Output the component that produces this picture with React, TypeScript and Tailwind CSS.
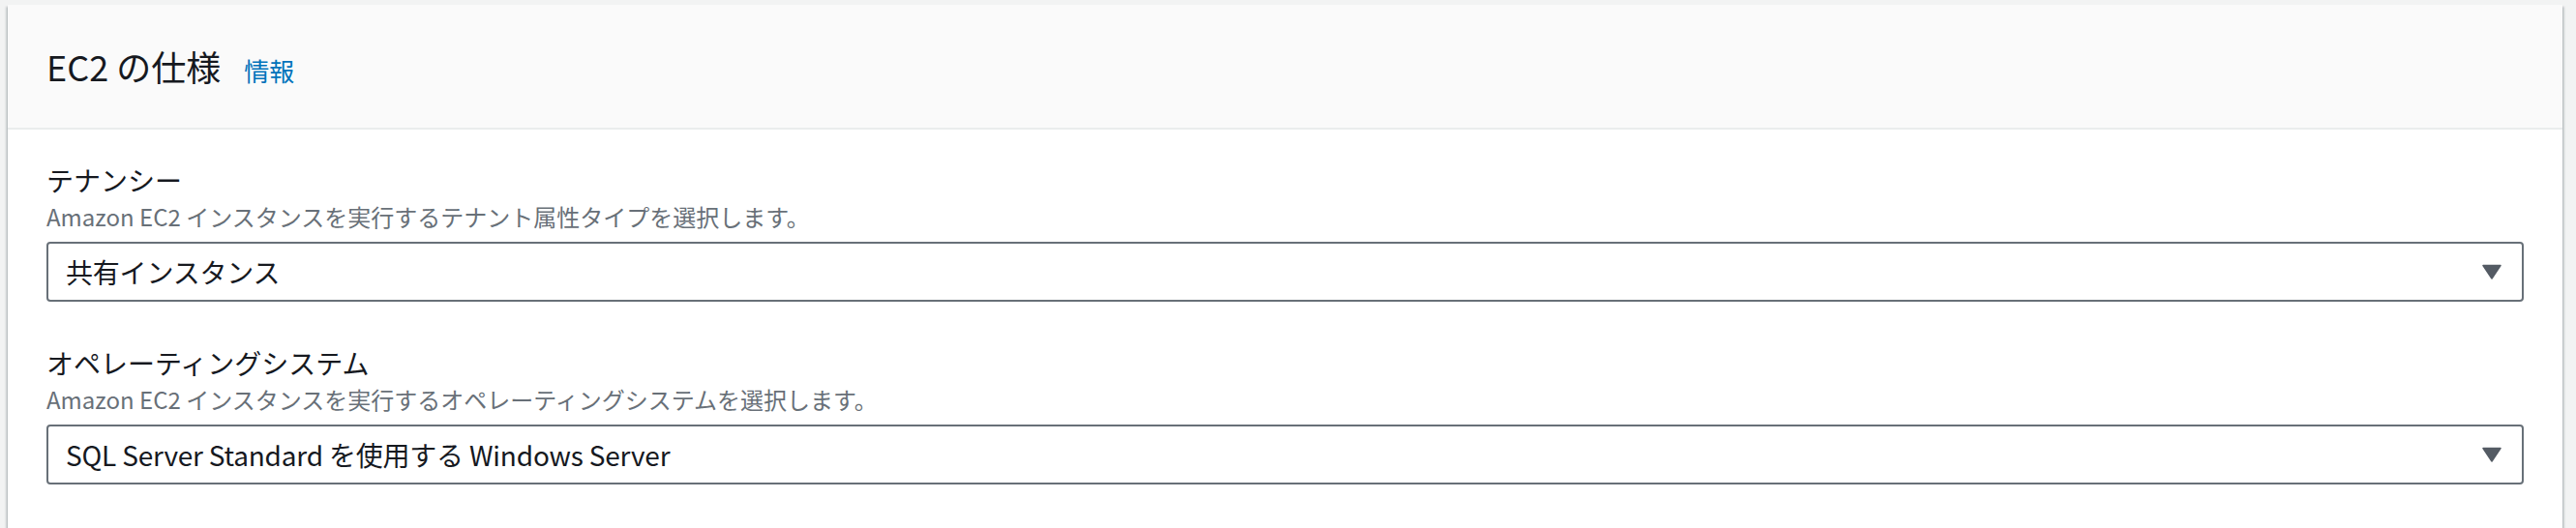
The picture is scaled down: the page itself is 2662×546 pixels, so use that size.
import React from 'react';

interface SelectFieldProps {
  label: string;
  description: string;
  value: string;
}

const font = { fontFamily: '"Noto Sans CJK JP", "Noto Sans", sans-serif' };

// Filled caret used by the native-looking select
const Caret = () => (
  <svg width="20" height="16" viewBox="0 0 20 16" className="shrink-0">
    <path d="M1 1.5 H19 L10 15 Z" fill="#545b64" stroke="#545b64" strokeWidth="1.5" strokeLinejoin="round" />
  </svg>
);

const SelectField = ({ label, description, value }: SelectFieldProps) => (
  <div className="flex flex-col">
    <div className="text-[28px] leading-[40px] text-[#16191f]">{label}</div>
    <div className="text-[24px] leading-[36px] text-[#687078]">{description}</div>
    <div className="mt-2 h-[62px] flex items-center justify-between border-2 border-[#687078] rounded-[4px] bg-white pl-[18px] pr-[21px]">
      <span className="text-[28px] leading-[40px] text-[#16191f] tracking-[-0.2px]">{value}</span>
      <Caret />
    </div>
  </div>
);

export default function App() {
  const fields = [
    {
      label: 'テナンシー',
      description: 'Amazon EC2 インスタンスを実行するテナント属性タイプを選択します。',
      value: '共有インスタンス',
    },
    {
      label: 'オペレーティングシステム',
      description: 'Amazon EC2 インスタンスを実行するオペレーティングシステムを選択します。',
      value: 'SQL Server Standard を使用する Windows Server',
    },
  ];

  return (
    <div className="w-full h-[546px] overflow-hidden bg-[#f2f3f3] pt-[5px] pl-[8px] pr-[14px]" style={font}>
      <div className="bg-white h-[600px] shadow-[0_2px_2px_0_rgba(0,28,36,0.3),2px_2px_2px_0_rgba(0,28,36,0.15),-2px_2px_2px_0_rgba(0,28,36,0.15)]">
        {/* Panel header */}
        <div className="h-[129px] flex items-center px-10 bg-[#fafafa] border-b-2 border-[#eaeded]">
          <div className="flex items-baseline gap-[24px]">
            <h2 className="text-[36px] leading-[44px] text-[#16191f]">EC2 の仕様</h2>
            <a className="text-[26px] leading-[36px] text-[#0073bb]">情報</a>
          </div>
        </div>

        {/* Fields */}
        <div className="px-10 pt-8 flex flex-col gap-[43px]">
          {fields.map((f) => (
            <SelectField key={f.label} label={f.label} description={f.description} value={f.value} />
          ))}
        </div>
      </div>
    </div>
  );
}
